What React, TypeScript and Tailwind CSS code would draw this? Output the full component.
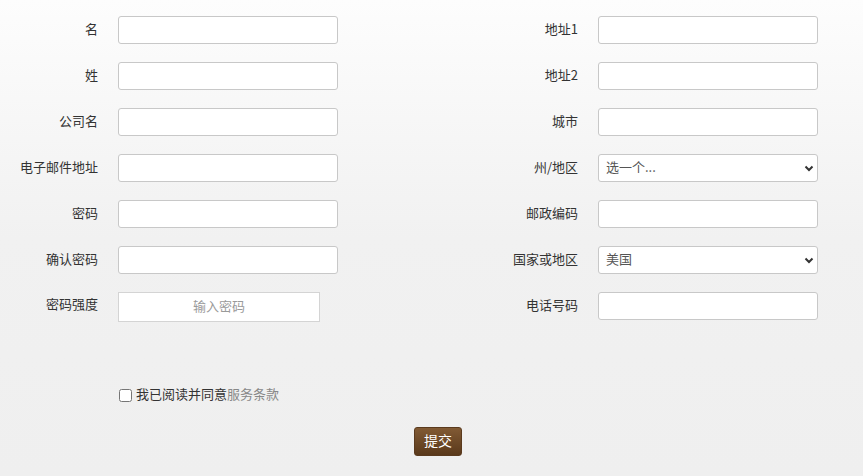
import { ReactNode } from "react"

const font = { fontFamily: '"Noto Sans CJK SC", "Noto Sans", sans-serif' }

function Row({ label, children }: { label: string; children: ReactNode }) {
  return (
    <div className="flex items-center h-[28px] mb-[18px]">
      <label className="w-[98px] text-right text-[13px] text-[#333] pb-[3px]">{label}</label>
      <div className="ml-[20px]">{children}</div>
    </div>
  )
}

function Input() {
  return (
    <input
      type="text"
      className="block w-[220px] h-[28px] bg-white border border-[#c8c8c8] rounded-[3px] px-2 text-[13px] outline-none"
    />
  )
}

function Chevron() {
  return (
    <svg width="10" height="7" viewBox="0 0 10 7" className="absolute right-[4px] top-[11px] pointer-events-none">
      <path d="M1.5 1.5 L5 5 L8.5 1.5" fill="none" stroke="#333" strokeWidth="2" />
    </svg>
  )
}

function Select({ value }: { value: string }) {
  return (
    <div className="relative w-[220px] h-[28px]">
      <select
        defaultValue={value}
        className="appearance-none block w-[220px] h-[28px] bg-white border border-[#c8c8c8] rounded-[3px] pl-[7px] pb-[2px] text-[13px] text-[#555] outline-none"
      >
        <option>{value}</option>
      </select>
      <Chevron />
    </div>
  )
}

export default function App() {
  return (
    <div
      className="w-full h-[476px] bg-gradient-to-b from-[#fdfdfd] via-[#f1f1f1] to-[#efefef] pt-[16px] overflow-hidden"
      style={font}
    >
      <div className="flex">
        <div className="w-[480px]">
          <Row label="名"><Input /></Row>
          <Row label="姓"><Input /></Row>
          <Row label="公司名"><Input /></Row>
          <Row label="电子邮件地址"><Input /></Row>
          <Row label="密码"><Input /></Row>
          <Row label="确认密码"><Input /></Row>
          <div className="flex items-start h-[30px]">
            <label className="w-[98px] text-right text-[13px] text-[#333] leading-[24px]">密码强度</label>
            <div className="ml-[20px] w-[202px] h-[30px] bg-white border border-[#d4d4d4] flex items-center justify-center pb-[2px] text-[13px] text-[#9a9a9a]">
              输入密码
            </div>
          </div>
        </div>
        <div className="w-[383px]">
          <Row label="地址1"><Input /></Row>
          <Row label="地址2"><Input /></Row>
          <Row label="城市"><Input /></Row>
          <Row label="州/地区"><Select value="选一个..." /></Row>
          <Row label="邮政编码"><Input /></Row>
          <Row label="国家或地区"><Select value="美国" /></Row>
          <Row label="电话号码"><Input /></Row>
        </div>
      </div>

      <div className="flex items-center ml-[118px] mt-[50px] h-[14px]">
        <input type="checkbox" className="w-[13px] h-[13px] m-0 ml-[1px]" />
        <span className="ml-[4px] text-[13px] text-[#333] pb-[2px]">
          我已阅读并同意<span className="text-[#888]">服务条款</span>
        </span>
      </div>

      <div className="flex justify-center mt-[25px] pl-[13px]">
        <button className="w-[48px] h-[29px] rounded-[3px] bg-gradient-to-b from-[#815a34] to-[#5a391b] text-white text-[14px] pb-[2px] border border-[#5a3a1e]">
          提交
        </button>
      </div>
    </div>
  )
}
